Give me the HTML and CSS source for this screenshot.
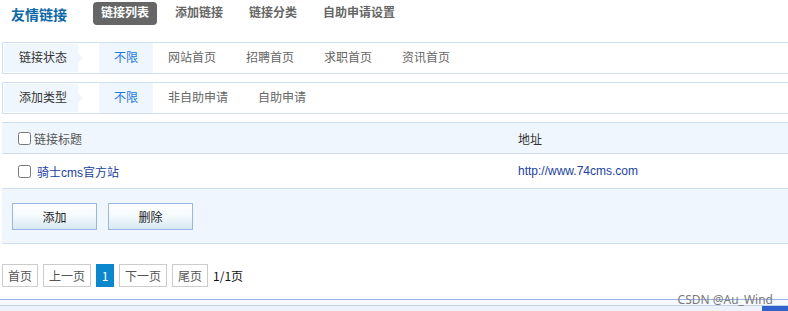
FILE: index.html
```html
<!DOCTYPE html>
<html lang="zh-CN">
<head>
    <meta charset="UTF-8">
    <meta name="viewport" content="width=device-width, initial-scale=1.0">
    <title>友情链接 - 链接列表</title>
    <link rel="stylesheet" href="styles.css">
</head>
<body>
    <div class="page">
        <!-- 顶部导航 -->
        <div class="top-nav">
            <span class="nav-title">友情链接</span>
            <a class="nav-tab active" href="#">链接列表</a>
            <a class="nav-tab" href="#">添加链接</a>
            <a class="nav-tab" href="#">链接分类</a>
            <a class="nav-tab" href="#">自助申请设置</a>
        </div>

        <!-- 筛选 -->
        <div class="filter-row">
            <div class="filter-label">链接状态</div>
            <div class="filter-items">
                <a class="filter-item active" href="#">不限</a>
                <a class="filter-item" href="#">网站首页</a>
                <a class="filter-item" href="#">招聘首页</a>
                <a class="filter-item" href="#">求职首页</a>
                <a class="filter-item" href="#">资讯首页</a>
            </div>
        </div>
        <div class="filter-row">
            <div class="filter-label">添加类型</div>
            <div class="filter-items">
                <a class="filter-item active" href="#">不限</a>
                <a class="filter-item" href="#">非自助申请</a>
                <a class="filter-item" href="#">自助申请</a>
            </div>
        </div>

        <!-- 列表 -->
        <div class="link-table">
            <div class="table-head">
                <div class="col-title"><input type="checkbox" class="chk"><span>链接标题</span></div>
                <div class="col-url">地址</div>
            </div>
            <div class="table-row">
                <div class="col-title"><input type="checkbox" class="chk"><a class="link" href="#">骑士cms官方站</a></div>
                <div class="col-url"><a class="link" href="#">http://www.74cms.com</a></div>
            </div>
            <div class="table-actions">
                <button class="btn">添加</button>
                <button class="btn">删除</button>
            </div>
        </div>

        <!-- 分页 -->
        <div class="pager">
            <a class="page-btn" href="#">首页</a>
            <a class="page-btn" href="#">上一页</a>
            <span class="page-btn current">1</span>
            <a class="page-btn" href="#">下一页</a>
            <a class="page-btn" href="#">尾页</a>
            <span class="page-total">1/1页</span>
        </div>
    </div>

    <div class="footer-bar">
        <span class="watermark">CSDN @Au_Wind</span>
        <span class="footer-block"></span>
    </div>
</body>
</html>
```

FILE: styles.css
```css
body {
    margin: 0;
    padding: 0;
    font-family: "Liberation Sans", "Noto Sans CJK SC", sans-serif;
    font-size: 12px;
    color: #333;
    background: #fff;
    overflow: hidden;
}
a {
    text-decoration: none;
}
.page {
    width: 800px;
    padding-left: 2px;
}
.top-nav {
    display: flex;
    align-items: center;
    height: 23px;
    padding-top: 2px;
    margin-bottom: 17px;
}
.nav-title {
    font-size: 14px;
    font-weight: bold;
    color: #0d68a8;
    margin-left: 9px;
    margin-right: 26px;
}
.nav-tab {
    display: block;
    height: 23px;
    line-height: 23px;
    padding: 0 8px;
    margin-right: 10px;
    font-weight: bold;
    color: #666;
    border-radius: 4px;
}
.nav-tab.active {
    background: #666;
    color: #fff;
}
.filter-row {
    display: flex;
    height: 30px;
    border: 1px solid #cddff0;
    margin-bottom: 8px;
}
.filter-label {
    position: relative;
    width: 59px;
    margin: 1px 0 1px 1px;
    padding-left: 15px;
    line-height: 28px;
    background: #eff6fd;
    color: #333;
}
.filter-label::after {
    content: "";
    position: absolute;
    right: -5px;
    top: 9px;
    border-left: 5px solid #eff6fd;
    border-top: 5px solid transparent;
    border-bottom: 5px solid transparent;
}
.filter-items {
    display: flex;
    margin-left: 21px;
}
.filter-item {
    display: block;
    padding: 0 15px;
    line-height: 30px;
    color: #666;
}
.filter-item.active {
    background: #eff6fd;
    color: #1a7adf;
}
.link-table {
    border-top: 1px solid #cddff0;
}
.table-head, .table-row {
    display: flex;
    align-items: center;
    border-bottom: 1px solid #cddff0;
}
.table-head {
    height: 30px;
    background: #eff6fd;
    color: #555;
}
.table-row {
    height: 34px;
}
.col-title {
    display: flex;
    align-items: center;
    width: 501px;
    padding-left: 16px;
    box-sizing: border-box;
}
.col-url {
    padding-left: 15px;
    color: #333;
}
.chk {
    width: 13px;
    height: 13px;
    margin: 0 3px 0 0;
}
.table-row .chk {
    margin-right: 6px;
}
.link {
    color: #1c3e9f;
}
.table-actions {
    display: flex;
    gap: 11px;
    height: 55px;
    padding: 14px 0 0 10px;
    box-sizing: border-box;
    background: #eff6fd;
    border-bottom: 1px solid #cddff0;
}
.btn {
    width: 85px;
    height: 27px;
    border: 1px solid #9cb5e2;
    background: linear-gradient(#ffffff 0%, #f6fbfd 45%, #d6e8f2 100%);
    font-family: "Noto Sans CJK SC", sans-serif;
    font-size: 12px;
    color: #222;
    cursor: pointer;
}
.pager {
    display: flex;
    align-items: center;
    gap: 5px;
    margin-top: 20px;
    height: 23px;
    font-family: "Noto Sans CJK SC", sans-serif;
}
.page-btn {
    display: block;
    height: 21px;
    line-height: 21px;
    padding: 0 5px;
    border: 1px solid #ccc;
    color: #555;
}
.page-btn.current {
    width: 18px;
    padding: 0;
    height: 23px;
    line-height: 23px;
    border: none;
    text-align: center;
    background: #0a87cd;
    color: #fff;
}
.page-total {
    color: #111;
}
.footer-bar {
    position: relative;
    margin-top: 12px;
    height: 12px;
    border-top: 1px solid #98b2e2;
    background: #eef3fb;
}
.footer-bar::before {
    content: "";
    display: block;
    height: 5px;
    background: #f6f9fe;
    border-bottom: 1px solid #c2d2ee;
}
.watermark {
    position: absolute;
    right: 15px;
    top: -9px;
    font-family: "Noto Sans", sans-serif;
    font-size: 12px;
    color: #7a7a7a;
}
.footer-block {
    position: absolute;
    right: 0;
    bottom: 0;
    width: 26px;
    height: 6px;
    background: #2f62cf;
}
```
